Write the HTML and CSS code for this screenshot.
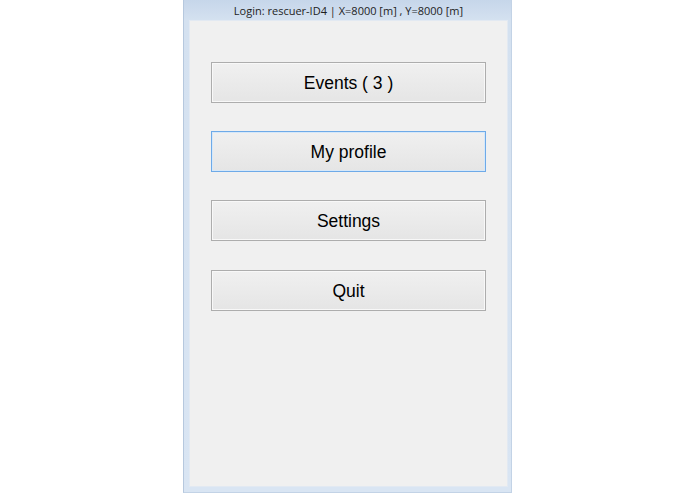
FILE: index.html
```html
<!DOCTYPE html>
<html>
<head>
<meta charset="utf-8">
<link rel="stylesheet" href="styles.css">
</head>
<body>
<div class="window">
  <div class="titlebar">Login: rescuer-ID4 | X=8000 [m] , Y=8000 [m]</div>
  <div class="client">
    <button class="btn">Events ( 3 )</button>
    <button class="btn btn-focus">My profile</button>
    <button class="btn">Settings</button>
    <button class="btn btn-last">Quit</button>
  </div>
</div>
</body>
</html>
```

FILE: styles.css
```css
html, body {
  margin: 0;
  padding: 0;
  background: #ffffff;
}
body {
  width: 695px;
  height: 494px;
  overflow: hidden;
  font-family: "Open Sans", "Noto Sans", "Liberation Sans", sans-serif;
}
.window {
  width: 329px;
  height: 493px;
  margin: 0 auto;
  box-sizing: border-box;
  background: linear-gradient(to bottom, #c6d6ea 0px, #d4e1f0 20px, #d9e5f3 100%);
  border-left: 1px solid #b6c8de;
  border-right: 1px solid #c3d3e6;
  border-bottom: 1px solid #c3d3e6;
  padding: 0 3px 5px 5px;
  display: flex;
  flex-direction: column;
}
.titlebar {
  height: 20px;
  line-height: 21px;
  text-align: center;
  font-size: 11px;
  color: #1e1e1e;
  white-space: nowrap;
}
.client {
  flex: 1;
  background: #f0f0f0;
  border: 1px solid #e2e9f2;
  display: flex;
  flex-direction: column;
  align-items: center;
  padding-top: 41px;
  gap: 28px;
}
.btn {
  appearance: none;
  -webkit-appearance: none;
  width: 275px;
  height: 41px;
  box-sizing: border-box;
  border: 1px solid #adadad;
  border-radius: 0;
  background: linear-gradient(to bottom, #f0f0f0, #e5e5e5);
  box-shadow: inset 0 0 0 1px #f8f8f8;
  font-family: "Liberation Sans", "Open Sans", sans-serif;
  font-size: 17.5px;
  color: #000000;
  padding: 1px 0 0 0;
  margin: 0;
  cursor: default;
}
.btn-focus {
  border-color: #6eaae8;
  box-shadow: inset 0 0 0 1px #d6e8f9;
}
.btn-last {
  margin-top: 1px;
}
```
